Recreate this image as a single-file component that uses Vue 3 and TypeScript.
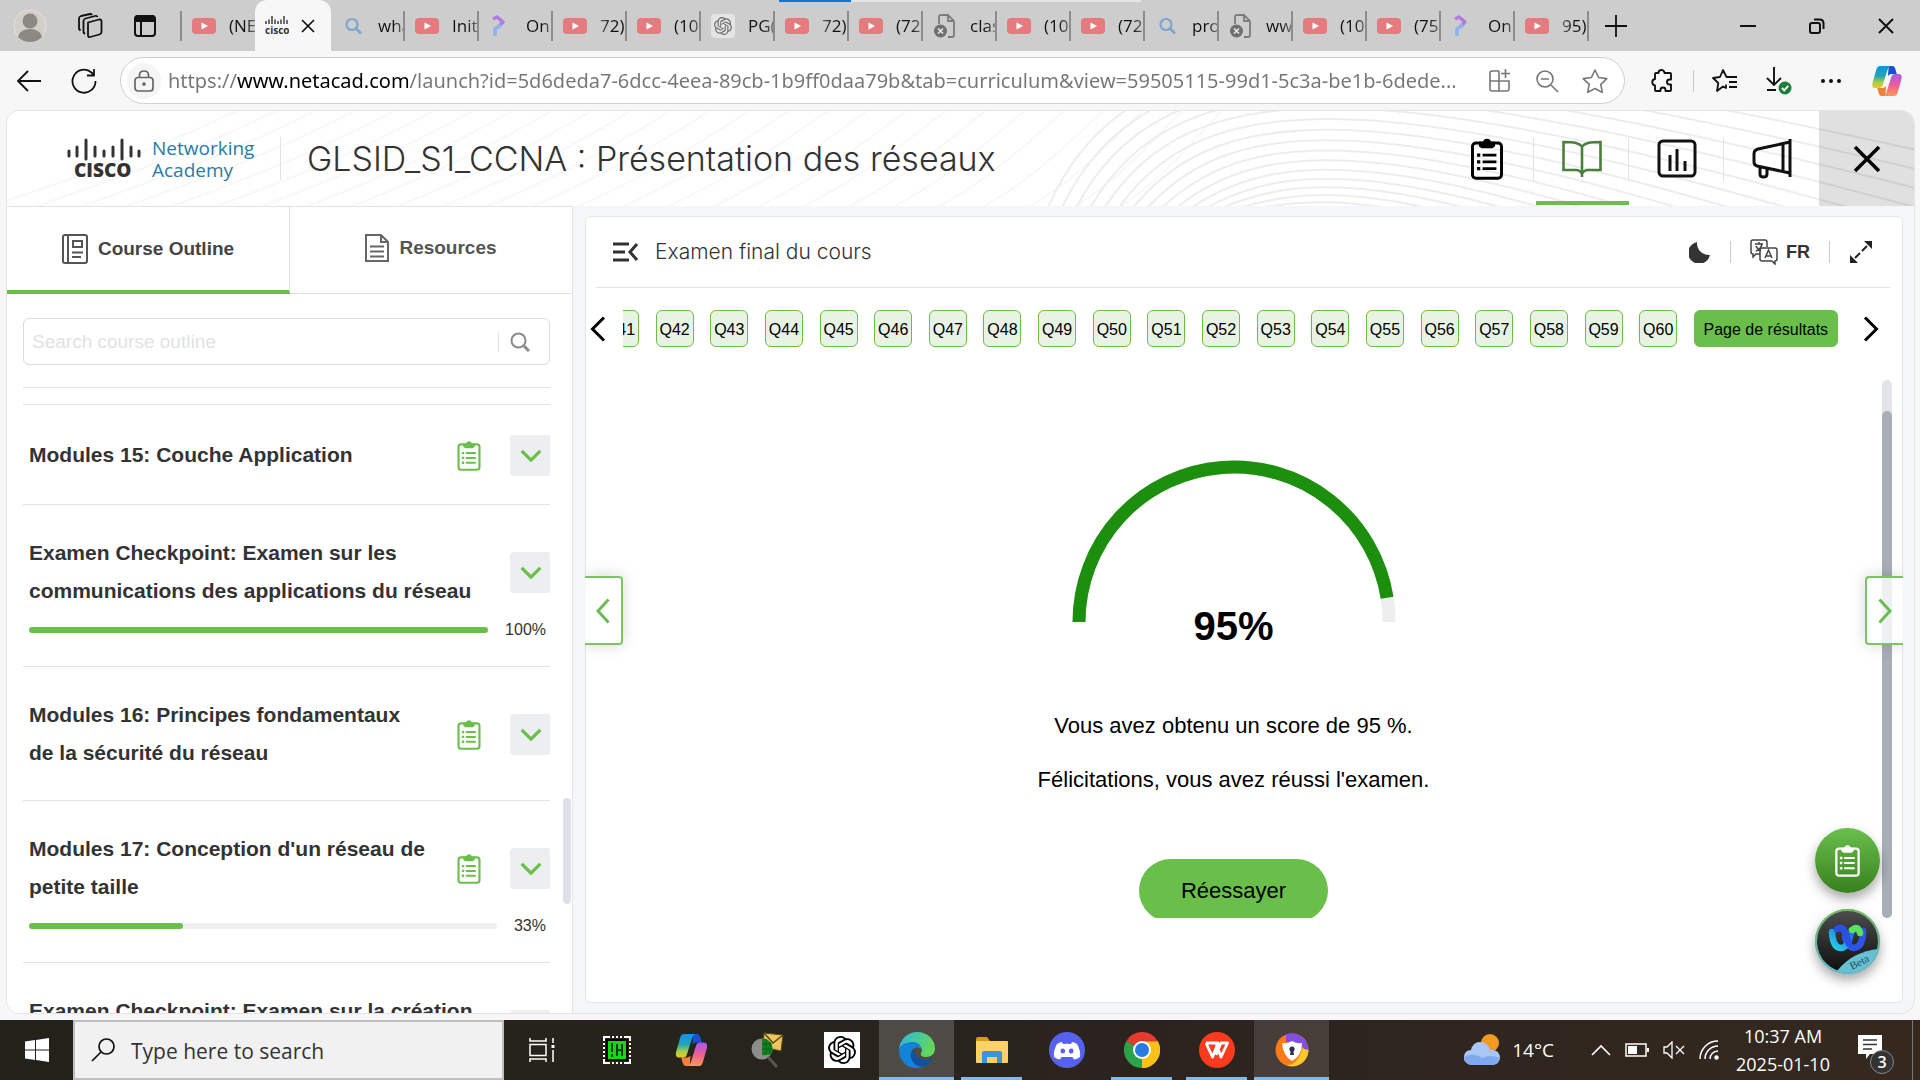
<script setup lang="ts">
import { ref } from 'vue'

type TabIcon = 'youtube' | 'search' | 'pearson' | 'gpt' | 'broken'

interface BrowserTab {
  icon: TabIcon
  title: string
  fade?: boolean
}

interface OutlineItem {
  title: string
  assessment: boolean
  progress?: number
}

interface TaskbarApp {
  icon: string
  label: string
  open?: boolean
  active?: boolean
}

const url = ref(
  'https://www.netacad.com/launch?id=5d6deda7-6dcc-4eea-89cb-1b9ff0daa79b&tab=curriculum&view=59505115-99d1-5c3a-be1b-6dede...',
)
const outlineQuery = ref('')
const systemQuery = ref('')

const tabs: BrowserTab[] = [
  { icon: 'search', title: 'wha' },
  { icon: 'youtube', title: 'Init' },
  { icon: 'pearson', title: 'On' },
  { icon: 'youtube', title: '72)', fade: true },
  { icon: 'youtube', title: '(10' },
  { icon: 'gpt', title: 'PG(' },
  { icon: 'youtube', title: '72)', fade: true },
  { icon: 'youtube', title: '(72' },
  { icon: 'broken', title: 'clas' },
  { icon: 'youtube', title: '(10' },
  { icon: 'youtube', title: '(72' },
  { icon: 'search', title: 'pro' },
  { icon: 'broken', title: 'ww' },
  { icon: 'youtube', title: '(10' },
  { icon: 'youtube', title: '(75' },
  { icon: 'pearson', title: 'On' },
  { icon: 'youtube', title: '95)', fade: true },
]

const questions = Array.from({ length: 20 }, (_, i) => `Q${41 + i}`)

const outline: OutlineItem[] = [
  { title: 'Modules 15: Couche Application', assessment: true },
  {
    title: 'Examen Checkpoint: Examen sur les communications des applications du réseau',
    assessment: false,
    progress: 100,
  },
  { title: 'Modules 16: Principes fondamentaux de la sécurité du réseau', assessment: true },
  { title: "Modules 17: Conception d'un réseau de petite taille", assessment: true, progress: 33 },
  { title: 'Examen Checkpoint: Examen sur la création et la sécurisation', assessment: false },
]

const apps: TaskbarApp[] = [
  { icon: 'taskview', label: 'Task View' },
  { icon: 'chip', label: 'HWiNFO' },
  { icon: 'copilot', label: 'Copilot' },
  { icon: 'netscan', label: 'Network scanner' },
  { icon: 'openai', label: 'ChatGPT' },
  { icon: 'edge', label: 'Microsoft Edge', open: true, active: true },
  { icon: 'explorer', label: 'File Explorer', open: true },
  { icon: 'discord', label: 'Discord' },
  { icon: 'chrome', label: 'Google Chrome', open: true },
  { icon: 'wps', label: 'WPS Office', open: true },
  { icon: 'avast', label: 'Secure Browser', open: true, active: true },
]

const score = 95
const radius = 155
const angle = Math.PI * (1 - score / 100)
const endX = 162 + radius * Math.cos(angle)
const endY = 162 - radius * Math.sin(angle)
const scoreArc = `M7 162A${radius} ${radius} 0 0 1 ${endX} ${endY}`

const risingWaves = Array.from(
  { length: 26 },
  (_, i) => `M${-60 + i * 46} 110C${60 + i * 44} 70 ${150 + i * 41} 40 ${250 + i * 39} -10`,
)
const fallingWaves = Array.from(
  { length: 16 },
  (_, i) => `M${1040 + i * 14} 100C${1120 + i * 16} ${-90 + i * 12} ${1340 + i * 8} ${-90 + i * 12} 1960 ${50 + i * 20}`,
)
</script>

<template>
  <svg class="sprite" aria-hidden="true">
    <symbol id="clipboard" viewBox="0 0 24 32">
      <rect x="1.2" y="4.5" width="21.6" height="26.2" rx="2.6" fill="none" stroke="currentColor" stroke-width="2.2" />
      <path d="M6 3.6h3a3.1 3.1 0 0 1 6 0h3v3.2l-2 1.6H8L6 6.800z" fill="currentColor" />
      <path d="M8.700 13.500H19M8.700 18.500H19M8.700 23.500H19" stroke="currentColor" stroke-width="2" />
      <path d="M4.600 13.500h2.400M4.600 18.500h2.400M4.600 23.500h2.400" stroke="currentColor" stroke-width="2.400" />
    </symbol>
    <symbol id="chevron" viewBox="0 0 24 14">
      <path d="M2 2l10 10L22 2" fill="none" stroke="currentColor" stroke-width="3.500" />
    </symbol>
    <symbol id="knot" viewBox="0 0 24 24">
      <path
        d="M22.280 9.820a5.980 5.980 0 0 0-.520-4.910 6.050 6.050 0 0 0-6.510-2.900A6.070 6.070 0 0 0 4.980 4.180a5.980 5.980 0 0 0-4 2.900 6.050 6.050 0 0 0 .740 7.100 5.980 5.980 0 0 0 .510 4.910 6.050 6.050 0 0 0 6.510 2.900A5.980 5.980 0 0 0 13.260 24a6.060 6.060 0 0 0 5.770-4.210 5.990 5.990 0 0 0 4-2.900 6.060 6.060 0 0 0-.750-7.070zM13.260 22.430a4.480 4.480 0 0 1-2.880-1.040l.140-.080 4.780-2.760a.800.800 0 0 0 .390-.680v-6.740l2.020 1.170.040.050v5.580a4.500 4.500 0 0 1-4.490 4.500zM3.600 18.300a4.470 4.470 0 0 1-.530-3.010l.140.090 4.780 2.760a.770.770 0 0 0 .780 0l5.840-3.370v2.330l-.030.060-4.840 2.790a4.500 4.500 0 0 1-6.140-1.650zM2.340 7.900a4.490 4.490 0 0 1 2.370-1.970v5.680a.770.770 0 0 0 .390.680l5.810 3.350-2.020 1.170h-.070l-4.830-2.790A4.500 4.500 0 0 1 2.340 7.870zm16.600 3.860-5.840-3.390L15.120 7.200h.070l4.830 2.790a4.490 4.490 0 0 1-.680 8.100v-5.680a.790.790 0 0 0-.400-.650zm2.010-3.020-.140-.090-4.770-2.780a.780.780 0 0 0-.790 0L9.410 9.230V6.900l.030-.060 4.830-2.790a4.500 4.500 0 0 1 6.680 4.660zM8.310 12.860l-2.020-1.160-.040-.060V6.070a4.500 4.500 0 0 1 7.380-3.450l-.140.080-4.780 2.760a.800.800 0 0 0-.390.680zm1.100-2.360 2.600-1.500 2.610 1.500v3l-2.600 1.500-2.610-1.500z"
        fill="currentColor"
      />
    </symbol>
    <symbol id="copilot" viewBox="0 0 34 36">
      <defs>
        <linearGradient id="cpl" x1="0" y1="0" x2="0" y2="1">
          <stop offset="0" stop-color="#1590e8" />
          <stop offset=".45" stop-color="#22a5b5" />
          <stop offset=".75" stop-color="#a8cf45" />
          <stop offset="1" stop-color="#f3c722" />
        </linearGradient>
        <linearGradient id="cpr" x1="0" y1="0" x2="0" y2="1">
          <stop offset="0" stop-color="#a35bea" />
          <stop offset=".5" stop-color="#ee5c96" />
          <stop offset="1" stop-color="#fb9a55" />
        </linearGradient>
      </defs>
      <path d="M19 1h4c2 0 3 2 3.600 4l1.400 5h-7l-3 2z" fill="#1a50cf" />
      <path d="M15 35h-4c-2 0-3-2-3.500-4L6 26h7l3-2z" fill="#f2803a" />
      <path d="M9 1h12c-2 1-3 3-3.600 5l-5 16c-.8 3-2 4-4.400 4H4C0 26 0 22 1 19L5 5c1-3 2-4 4-4z" fill="url(#cpl)" />
      <path d="M25 35H13c2-1 3-3 3.600-5l5-16c.8-3 2-4 4.400-4h4c4 0 4 4 3 7l-4 14c-1 3-2 4-4 4z" fill="url(#cpr)" />
    </symbol>
  </svg>

  <div class="desktop">
    <header class="tabstrip">
      <div class="strip-tools">
        <button class="bare" aria-label="Profile">
          <svg width="34" height="34" viewBox="0 0 34 34">
            <circle cx="17" cy="17" r="16" fill="#d2cfcb" stroke="#e6e3df" />
            <circle cx="17" cy="12" r="7.500" fill="#8c8884" />
            <path d="M5 28c1-5 6-8 12-8s11 3 12 8c-3 3-7 5-12 5s-9-2-12-5z" fill="#8c8884" />
          </svg>
        </button>
        <button class="bare" aria-label="Workspaces">
          <svg width="26" height="26" viewBox="0 0 26 26" fill="none" stroke="#111" stroke-width="1.800" stroke-linejoin="round">
            <path d="M11 9.500 22 6.500q2.500-.500 2.500 2V19q0 2-2 2.500L13 24q-2 .500-2-2z" />
            <path d="M8 21 6.500 19.500V8q0-2 2-2.500L18 3q2-.500 2.500 1" />
            <path d="M3.500 17.500 2 16V5.500q0-2 2-2.500l9-2q1.500 0 2 1" />
          </svg>
        </button>
        <button class="bare" aria-label="Tab actions">
          <svg width="24" height="24" viewBox="0 0 24 24">
            <rect x="2" y="2" width="20" height="20" rx="3" fill="none" stroke="#111" stroke-width="2" />
            <path d="M1.500 4Q2 1 5 1h14q3 0 3.500 3v4h-21z" fill="#111" />
            <path d="M8 8v14" stroke="#111" stroke-width="2" />
          </svg>
        </button>
      </div>

      <div class="tabs">
        <div class="tab lead">
          <svg class="fav" viewBox="0 0 24 18"><rect y="1" width="24" height="16" rx="4" fill="#e57b7e" /><path d="M9.500 5.500 16 9l-6.500 3.500z" fill="#fff" /></svg>
          <span class="tab-title">(NE</span>
        </div>
        <div class="tab current">
          <svg width="24" height="20" viewBox="0 0 24 20" stroke="#333" stroke-width="1.400">
            <path d="M1 5v3M4 3.500V8M7 0v8M10 3.500V8M13 5v3M16 3.500V8M19 0v8M22 4v4" />
            <text x="0" y="18" font-size="10" font-weight="700" fill="#333" stroke="none" font-family="Open Sans, sans-serif">cisco</text>
          </svg>
          <button class="bare" aria-label="Close tab">
            <svg width="14" height="14" viewBox="0 0 14 14"><path d="M1 1l12 12M13 1 1 13" stroke="#111" stroke-width="1.700" /></svg>
          </button>
        </div>
        <div v-for="(tab, i) in tabs" :key="i" class="tab">
          <svg v-if="tab.icon === 'youtube'" class="fav" viewBox="0 0 24 18"><rect y="1" width="24" height="16" rx="4" fill="#e57b7e" /><path d="M9.500 5.500 16 9l-6.500 3.500z" fill="#fff" /></svg>
          <svg v-else-if="tab.icon === 'search'" class="fav" viewBox="0 0 24 18"><circle cx="11" cy="7.500" r="5.500" fill="none" stroke="#7da7cf" stroke-width="2.200" /><path d="m15 11.500 5 5" stroke="#7da7cf" stroke-width="2.600" /></svg>
          <svg v-else-if="tab.icon === 'pearson'" class="fav tall" viewBox="0 0 24 24">
            <path d="M4 5 8 3l6 5-5 5" fill="none" stroke="#b07be0" stroke-width="3.500" stroke-linejoin="round" />
            <path d="M6 22v-7l6-4" fill="none" stroke="#8fb2ee" stroke-width="3.500" />
          </svg>
          <svg v-else-if="tab.icon === 'gpt'" class="fav tall" viewBox="0 0 24 24"><rect width="24" height="24" rx="4" fill="#e4e4e4" /><g transform="translate(3 3) scale(.75)" color="#6c6c6c"><use href="#knot" width="24" height="24" /></g></svg>
          <svg v-else class="fav tall" viewBox="0 0 24 24"><path d="M6 10V3q0-2 2-2h7l6 6v14q0 2-2 2h-4M15 1v6h6" fill="none" stroke="#7c7c7c" stroke-width="1.800" /><circle cx="7.500" cy="17" r="6.500" fill="#707070" /><path d="m5 14.500 5 5m0-5-5 5" stroke="#eee" stroke-width="1.500" /></svg>
          <span class="tab-title" :class="{ 'fade-start': tab.fade }">{{ tab.title }}</span>
        </div>
        <button class="bare new-tab" aria-label="New tab">
          <svg width="22" height="22" viewBox="0 0 22 22"><path d="M11 0v22M0 11h22" stroke="#111" stroke-width="1.800" /></svg>
        </button>
      </div>

      <div class="window-buttons">
        <button class="bare" aria-label="Minimize"><svg width="16" height="16" viewBox="0 0 16 16"><path d="M0 8h16" stroke="#111" stroke-width="2" /></svg></button>
        <button class="bare" aria-label="Restore"><svg width="16" height="16" viewBox="0 0 16 16" fill="none" stroke="#111" stroke-width="2"><rect x="1" y="5" width="10" height="10" rx="2" /><path d="M5 1.500h5.500q4 0 4 4V11" /></svg></button>
        <button class="bare" aria-label="Close"><svg width="16" height="16" viewBox="0 0 16 16"><path d="M1 1l14 14M15 1 1 15" stroke="#111" stroke-width="2" /></svg></button>
      </div>
      <div class="media-bar"><span></span></div>
    </header>

    <div class="toolbar">
      <button class="bare" aria-label="Back"><svg width="26" height="24" viewBox="0 0 26 24" fill="none" stroke="#111" stroke-width="1.800"><path d="M25 12H2M12 2 2 12l10 10" /></svg></button>
      <button class="bare reload" aria-label="Refresh"><svg width="26" height="26" viewBox="0 0 26 26" fill="none" stroke="#111" stroke-width="1.800"><path d="M24.500 13A11.500 11.500 0 1 1 20.500 4.500L23 7M23 1v6.500h-7" /></svg></button>
      <div class="address">
        <button class="bare lock" aria-label="Site information">
          <svg width="20" height="22" viewBox="0 0 20 22" fill="none" stroke="#666" stroke-width="1.700"><rect x="1" y="7.500" width="18" height="13.500" rx="3" /><path d="M5.500 7.500V5q0-4 4.500-4t4.500 4v2.500" /><circle cx="10" cy="14" r="1" fill="#666" /></svg>
        </button>
        <input v-model="url" class="url" type="text" aria-label="Address" spellcheck="false" />
        <button class="bare" aria-label="Install app"><svg width="24" height="24" viewBox="0 0 24 24" fill="none" stroke="#777" stroke-width="1.600"><path d="M11 2H4Q2 2 2 4v16q0 2 2 2h15q2 0 2-2v-8H2M11 2v20M17.500 0v9M13 4.500h9" /></svg></button>
        <button class="bare" aria-label="Zoom"><svg width="24" height="24" viewBox="0 0 24 24" fill="none" stroke="#777" stroke-width="1.600"><circle cx="10" cy="10" r="8" /><path d="m16 16 7 7M6 10h8" /></svg></button>
        <button class="bare" aria-label="Add to favorites"><svg width="26" height="24" viewBox="0 0 26 24" fill="none" stroke="#777" stroke-width="1.600" stroke-linejoin="round"><path d="m13 1 3.600 7.500 8.200 1.100-6 5.700 1.500 8.100L13 19.500l-7.300 3.900 1.500-8.100-6-5.700 8.200-1.100z" /></svg></button>
      </div>
      <div class="tool-icons">
        <button class="bare" aria-label="Extensions"><svg width="26" height="26" viewBox="0 0 26 26" fill="none" stroke="#111" stroke-width="1.900" stroke-linejoin="round"><path d="M9.500 5a3 3 0 0 1 6 0h5.500q1 0 1 1v5.500h-1.500a2.500 2.500 0 0 0 0 5H22V22q0 1-1 1h-4.500v-1a2.500 2.500 0 0 0-5 0v1H7q-1 0-1-1v-4.500a3.300 3.300 0 0 1 0-6.500V6q0-1 1-1z" /></svg></button>
        <span class="rule"></span>
        <button class="bare" aria-label="Favorites"><svg width="26" height="24" viewBox="0 0 26 24" fill="none" stroke="#111" stroke-width="1.800" stroke-linejoin="round"><path d="M14 15.500V19l-3-1.500L5 22l1.300-8L1 9l7-1 3-7 3.500 7H25M17 13h8M17 18h8" /></svg></button>
        <button class="bare" aria-label="Downloads"><svg width="26" height="28" viewBox="0 0 26 28" fill="none" stroke="#111" stroke-width="1.900"><path d="M8 0v18M1 11l7 7 7-7M1 23h9" /><circle cx="19" cy="21" r="6.500" fill="#1b7f3b" stroke="none" /><path d="m16 21 2.200 2.300 4-4.500" stroke="#fff" /></svg></button>
        <button class="bare" aria-label="Settings and more"><svg width="22" height="6" viewBox="0 0 22 6" fill="#111"><circle cx="3" cy="3" r="2" /><circle cx="11" cy="3" r="2" /><circle cx="19" cy="3" r="2" /></svg></button>
        <button class="bare" aria-label="Copilot"><svg width="34" height="32"><use href="#copilot" width="34" height="32" /></svg></button>
      </div>
    </div>

    <main class="page">
      <header class="course-bar">
        <svg class="waves" viewBox="0 0 1908 95" preserveAspectRatio="none" fill="none" aria-hidden="true">
          <g stroke="#f8f8f9" stroke-width="2"><path v-for="(d, i) in risingWaves" :key="i" :d="d" /></g>
          <g stroke="#ecedf1" stroke-width="2"><path v-for="(d, i) in fallingWaves" :key="i" :d="d" /></g>
        </svg>
        <a class="brand" href="#">
          <svg width="74" height="42" viewBox="0 0 74 42">
            <path d="M2 13v5M10 9v9M19 2v19M28 9v9M37 13v5M46 9v9M55 2v19M64 9v9M72 13v5" stroke="#333" stroke-width="3" stroke-linecap="round" />
            <text x="7" y="39" font-size="19" font-weight="800" fill="#333" font-family="Open Sans, sans-serif">CISCO</text>
          </svg>
          <span>Networking<br />Academy</span>
        </a>
        <h1>GLSID_S1_CCNA : Présentation des réseaux</h1>
        <nav>
          <button class="bare nav-item" aria-label="Assessments"><svg width="34" height="43"><use href="#clipboard" width="34" height="43" /></svg></button>
          <button class="bare nav-item selected" aria-label="Curriculum"><svg width="40" height="38" viewBox="0 0 40 38" fill="none" stroke="#4a7f3c" stroke-width="2.600"><path d="M20 6.500C17 3 13 2 1.500 2v28H14q4 0 6 4 2-4 6-4h12.500V2C27 2 23 3 20 6.500zV37" /></svg></button>
          <button class="bare nav-item" aria-label="Grades"><svg width="40" height="40" viewBox="0 0 40 40" fill="none" stroke="#111" stroke-width="3"><rect x="2" y="2" width="36" height="35" rx="4" /><path d="M13 16v16M20 10v22M28 22v10" /></svg></button>
          <button class="bare nav-item" aria-label="Announcements"><svg width="42" height="42" viewBox="0 0 42 42" fill="none" stroke="#111" stroke-width="3"><path d="M39 1v38M32 5v29M39 4 7 11Q3 12 3 16v8q0 3 3 4l33 7M9 29v7q0 3 3.500 3t3.500-3v-6" /></svg></button>
          <button class="bare nav-item exit" aria-label="Close course"><svg width="28" height="28" viewBox="0 0 28 28"><path d="M2 2l24 24M26 2 2 26" stroke="#000" stroke-width="3.500" /></svg></button>
        </nav>
      </header>

      <div class="workspace">
        <aside>
          <div class="side-tabs">
            <button class="bare side-tab chosen">
              <svg width="26" height="30" viewBox="0 0 26 30" fill="none" stroke="#555" stroke-width="2"><rect x="1" y="1" width="24" height="28" rx="2" /><path d="M6 1v28M10 18.500h11M10 23h9" /><rect x="11" y="7" width="9" height="6" /></svg>
              Course Outline
            </button>
            <button class="bare side-tab">
              <svg width="24" height="28" viewBox="0 0 24 28" fill="none" stroke="#666" stroke-width="2"><path d="M1 1h15l7 7v19H1zM16 1v7h7M5 12.500h14M5 17.500h14M5 22.500h14" /></svg>
              Resources
            </button>
          </div>
          <div class="outline-search">
            <input v-model="outlineQuery" type="text" placeholder="Search course outline" aria-label="Search course outline" />
            <button class="bare" aria-label="Search"><svg width="20" height="20" viewBox="0 0 20 20" fill="none" stroke="#8a8a8a" stroke-width="2"><circle cx="8.500" cy="8.500" r="7" /><path d="m14 14 5 5" stroke-width="3" /></svg></button>
          </div>
          <div class="outline">
            <section v-for="item in outline" :key="item.title">
              <div class="item-row">
                <h2>{{ item.title }}</h2>
                <svg v-if="item.assessment" class="item-icon" width="24" height="31"><use href="#clipboard" width="24" height="31" /></svg>
                <button class="bare expand" aria-label="Expand"><svg width="24" height="13"><use href="#chevron" width="24" height="13" /></svg></button>
              </div>
              <div v-if="item.progress" class="progress">
                <div class="bar"><span :style="{ width: item.progress + '%' }"></span></div>
                <span>{{ item.progress }}%</span>
              </div>
            </section>
          </div>
          <div class="side-scroll"></div>
        </aside>

        <div class="stage">
          <article>
            <header class="lesson-bar">
              <button class="bare" aria-label="Toggle menu"><svg width="26" height="20" viewBox="0 0 26 20" fill="none" stroke="#333" stroke-width="3"><path d="M0 2h16M0 10h12M0 18h16M24 2l-7 8 7 8" /></svg></button>
              <h2>Examen final du cours</h2>
              <div class="lesson-tools">
                <button class="bare" aria-label="Dark mode"><svg width="22" height="22" viewBox="0 0 22 22"><path d="M8 1A11 11 0 1 0 21 14 12 12 0 0 1 8 1z" fill="#333" /></svg></button>
                <span class="rule"></span>
                <button class="bare lang">
                  <svg width="28" height="26" viewBox="0 0 28 26" fill="none" stroke="#444" stroke-width="1.500"><path d="M10 15H6l-3 3v-3q-2 0-2-2V3q0-2 2-2h12q2 0 2 2v5M5 5h8M9 3v2M6 12q5-2 6-7M6 7q2 4 5 5" /><path d="M12 9h13q2 0 2 2v9q0 2-2 2v3l-3-3H12q-2 0-2-2v-9q0-2 2-2zM15 19l3.500-8 3.500 8M16 17h5" /></svg>
                  FR
                </button>
                <span class="rule"></span>
                <button class="bare" aria-label="Fullscreen"><svg width="24" height="24" viewBox="0 0 24 24"><path d="m6 18 5-5M13 11l5-5" stroke="#222" stroke-width="2" /><path d="M23 1v8l-8-8zM1 23v-8l8 8z" fill="#222" /></svg></button>
              </div>
            </header>
            <div class="question-bar">
              <button class="bare" aria-label="Previous questions"><svg width="16" height="26" viewBox="0 0 16 26" fill="none" stroke="#000" stroke-width="3"><path d="M14 1.500 2.500 13 14 24.500" /></svg></button>
              <div class="question-window">
                <div class="question-track">
                  <button v-for="q in questions" :key="q" class="chip">{{ q }}</button>
                  <button class="chip results">Page de résultats</button>
                </div>
              </div>
              <button class="bare" aria-label="Next questions"><svg width="16" height="26" viewBox="0 0 16 26" fill="none" stroke="#000" stroke-width="3"><path d="M2 1.500 13.500 13 2 24.500" /></svg></button>
            </div>
            <div class="lesson-view">
              <div class="result">
                <div class="gauge">
                  <svg width="324" height="162" viewBox="0 0 324 162" fill="none" stroke-width="13" aria-hidden="true">
                    <path d="M7 162A155 155 0 0 1 317 162" stroke="#eee" />
                    <path :d="scoreArc" stroke="#1c8f0f" />
                  </svg>
                  <strong>{{ score }}%</strong>
                </div>
                <p>Vous avez obtenu un score de 95 %.</p>
                <p>Félicitations, vous avez réussi l'examen.</p>
                <button class="retry">Réessayer</button>
              </div>
              <div class="view-scroll"><span></span></div>
            </div>
            <button class="pager prev" aria-label="Previous page"><svg width="14" height="26" viewBox="0 0 14 26" fill="none" stroke="#6cbd50" stroke-width="3"><path d="M12.500 1.500 2 13l10.500 11.500" /></svg></button>
            <button class="pager next" aria-label="Next page"><svg width="14" height="26" viewBox="0 0 14 26" fill="none" stroke="#6cbd50" stroke-width="3"><path d="M1.500 1.500 12 13 1.500 24.500" /></svg></button>
            <div class="floating">
              <button class="round tasks" aria-label="Assessments"><svg width="25" height="33"><use href="#clipboard" width="25" height="33" /></svg></button>
              <button class="round webex" aria-label="Webex assistant">
                <svg width="65" height="65" viewBox="0 0 65 65">
                  <defs>
                    <linearGradient id="wxring" x1="0" y1="0" x2="0" y2="1"><stop offset="0" stop-color="#76b562" /><stop offset="1" stop-color="#5bbcd8" /></linearGradient>
                    <linearGradient id="wxback" x1="0" y1="0" x2="0" y2="1"><stop offset="0" stop-color="#4c4c4c" /><stop offset="1" stop-color="#0e0e0e" /></linearGradient>
                    <linearGradient id="wxa" x1="0" y1="1" x2="1" y2="0"><stop offset="0" stop-color="#23d3e8" /><stop offset="1" stop-color="#2448e0" /></linearGradient>
                    <clipPath id="wxclip"><circle cx="32.500" cy="32.500" r="31.500" /></clipPath>
                  </defs>
                  <circle cx="32.500" cy="32.500" r="32.500" fill="url(#wxring)" />
                  <circle cx="32.500" cy="32.500" r="30.500" fill="url(#wxback)" />
                  <path d="M22 62Q38 42 65 40v25H22z" fill="#66bfd2" clip-path="url(#wxclip)" />
                  <g fill="none" stroke-width="6.500" stroke-linecap="round">
                    <path d="M48 22q0 16-9 17-6 0-9-11" stroke="#2f55e8" />
                    <path d="M17 23q1 16 9 16 6 0 9-11 2-9 8-9" stroke="url(#wxa)" />
                    <path d="M22 20q6-4 9 6l3 9" stroke="#2a50e6" />
                    <path d="M37 21q6-5 8 3" stroke="#5be25c" />
                  </g>
                  <text x="37" y="61" font-size="11" fill="#25505c" font-family="Liberation Serif, serif" transform="rotate(-27 37 61)">Beta</text>
                </svg>
              </button>
            </div>
          </article>
        </div>
      </div>
    </main>

    <footer class="taskbar">
      <button class="bare start" aria-label="Start"><svg width="24" height="24" viewBox="0 0 24 24" fill="#fff"><path d="M0 3.500 10 2v9.500H0zM11 1.900 24 0v11.500H11zM0 12.500h10V22L0 20.500zM11 12.500h13V24l-13-1.900z" /></svg></button>
      <label class="system-search">
        <svg width="24" height="24" viewBox="0 0 24 24" fill="none" stroke="#111" stroke-width="1.700"><circle cx="15.500" cy="8.500" r="7.500" /><path d="M10 14 1 23" /></svg>
        <input v-model="systemQuery" type="text" placeholder="Type here to search" />
      </label>
      <div class="apps">
        <button v-for="app in apps" :key="app.label" class="bare app" :class="{ open: app.open, active: app.active }" :aria-label="app.label">
          <svg v-if="app.icon === 'taskview'" width="26" height="24" viewBox="0 0 26 24" fill="none" stroke="#fff" stroke-width="1.500"><path d="M1 0v3h16V0M1 24v-3h16v3M24 0v5M24 12v12" /><rect x="1" y="6.500" width="16" height="11" /><path d="M22.500 8.500h3" stroke-width="3" /></svg>
          <svg v-else-if="app.icon === 'chip'" width="28" height="28" viewBox="0 0 28 28"><rect x="1" y="1" width="26" height="26" fill="none" stroke="#fff" stroke-width="2" stroke-dasharray="2 2" /><path d="M1 5V1h4M23 1h4v4M27 23v4h-4M5 27H1v-4" fill="none" stroke="#fff" stroke-width="2" /><rect x="3" y="3" width="22" height="22" fill="#000" /><rect x="5" y="5" width="18" height="18" fill="#0fdc0f" /><path d="M9 7v9M9 18v3M14 8v12M19 8v12M14 14h5" stroke="#073807" stroke-width="2" /></svg>
          <svg v-else-if="app.icon === 'copilot'" width="35" height="34"><use href="#copilot" width="35" height="34" /></svg>
          <svg v-else-if="app.icon === 'netscan'" width="34" height="36" viewBox="0 0 34 36"><path d="m14 1 19 2-2 16-18-4z" fill="#ecc560" stroke="#5c4516" /><path d="m14 1 9 10 10-8" fill="none" stroke="#5c4516" stroke-width="1.500" /><circle cx="12" cy="17" r="10.500" fill="#8d8d89" /><path d="M12 6.500a10.500 10.500 0 0 1 9 16l-9 1z" fill="#16801b" /><path d="M12 12h10M12 17h10M16 7v16M20 10v12" stroke="#062" /><path d="m18 25 9 10" stroke="#555" stroke-width="3" /></svg>
          <span v-else-if="app.icon === 'openai'" class="gpt-tile"><svg width="28" height="28"><use href="#knot" width="28" height="28" /></svg></span>
          <svg v-else-if="app.icon === 'edge'" width="36" height="36" viewBox="0 0 36 36">
            <defs><linearGradient id="edg" x1="0" y1="0" x2="1" y2=".4"><stop offset="0" stop-color="#2bb6e6" /><stop offset="1" stop-color="#62d85a" /></linearGradient></defs>
            <path d="M0 17C1 7 9 0 18 0c11 0 18 8 18 16 0 6-4 9-9 9-4 0-6-2-5-4 2-2 1-9-7-9C7 12 1 14 0 17z" fill="url(#edg)" />
            <path d="M0 18C1 12 8 10 14 10c6 0 8 4 8 7-6-4-11 1-10 7 1 6 6 10 12 11C11 39 0 31 0 18z" fill="#1183d8" />
            <path d="M15 18c-6 4-3 16 9 17 5-2 8-5 10-9-6 4-18 2-19-8z" fill="#0e53a4" />
          </svg>
          <svg v-else-if="app.icon === 'explorer'" width="34" height="28" viewBox="0 0 34 28"><path d="M1 3q0-2 2-2h9l3 4h16q2 0 2 2v4H1z" fill="#d99a18" /><rect x="1" y="5" width="32" height="22" rx="1" fill="#fbd265" /><path d="M7 27V17q0-2 2-2h16q2 0 2 2v10h-5v-6H12v6z" fill="#3c94d8" /></svg>
          <svg v-else-if="app.icon === 'discord'" width="36" height="36" viewBox="0 0 36 36"><circle cx="18" cy="18" r="18" fill="#5662ee" /><path d="M13 10q-3 .5-5 2-4 7-3 13 3 2 6 2.500l1.500-2.500h11l1.500 2.500q3-.5 6-2.500 1-6-3-13-2-1.500-5-2l-1 2q-4-.6-8 0z" fill="#fff" /><ellipse cx="13.800" cy="19" rx="2.300" ry="2.600" fill="#5662ee" /><ellipse cx="22.200" cy="19" rx="2.300" ry="2.600" fill="#5662ee" /></svg>
          <svg v-else-if="app.icon === 'chrome'" width="36" height="36" viewBox="0 0 36 36"><path d="M18 18 2.400 9a18 18 0 0 1 31.200 0z" fill="#e33b2e" /><path d="M18 18 33.600 9A18 18 0 0 1 18 36z" fill="#fbc116" /><path d="M18 18 18 36A18 18 0 0 1 2.400 9z" fill="#2da04a" /><path d="M18 9.500h15.800A18 18 0 0 1 18 36l7.400-14z" fill="#fbc116" /><circle cx="18" cy="18" r="9" fill="#fff" /><circle cx="18" cy="18" r="7" fill="#2a7ae4" /></svg>
          <svg v-else-if="app.icon === 'wps'" width="36" height="36" viewBox="0 0 36 36"><circle cx="18" cy="18" r="18" fill="#fb3a1e" /><path d="M7 11h12l-5.500 14L7 11M17 11l5 14 6.500-14H22l-5 12" fill="none" stroke="#fff" stroke-width="2.800" stroke-linejoin="round" /></svg>
          <svg v-else width="34" height="34" viewBox="0 0 34 34"><circle cx="17" cy="17" r="16.500" fill="#fb7a1c" /><path d="M11 1.600A16.500 16.500 0 0 1 33 20q-8-12-22-11z" fill="#7f4fe8" /><path d="M33.500 17A16.500 16.500 0 0 1 12 32.500q12-2 15-17z" fill="#fbcb2c" /><path d="M17 8q5 3 10 2 0 13-10 18Q8 23 7 10q5 1 10-2z" fill="#fff" /><circle cx="17" cy="16" r="2.600" fill="#2b3050" /><path d="M16 16h2l1 6h-4z" fill="#2b3050" /></svg>
        </button>
      </div>
      <div class="tray">
        <button class="bare weather">
          <svg width="38" height="32" viewBox="0 0 38 32"><circle cx="27" cy="9" r="9" fill="#f39a1e" /><path d="M9 31q-9-1-8-9 1-6 7-6 2-8 9-8 8 0 10 8 9-1 10 7 0 7-8 8z" fill="#a9c6f5" /><path d="M1 23q10-5 18 1 9-4 17 0-1 7-7 7H9q-7 0-8-8z" fill="#7fa9ee" /></svg>
          14°C
        </button>
        <button class="bare" aria-label="Show hidden icons"><svg width="20" height="12" viewBox="0 0 20 12" fill="none" stroke="#fff" stroke-width="1.600"><path d="m1 11 9-9 9 9" /></svg></button>
        <button class="bare" aria-label="Battery"><svg width="24" height="14" viewBox="0 0 24 14"><rect x="1" y="1" width="20" height="12" fill="none" stroke="#fff" stroke-width="1.500" /><path d="M3 3h9v8H3zM22 5h2v4h-2z" fill="#fff" /></svg></button>
        <button class="bare" aria-label="Volume"><svg width="22" height="18" viewBox="0 0 22 18" fill="none" stroke="#fff" stroke-width="1.300"><path d="M1 6h3l5-5v16l-5-5H1zM13 5l8 8M21 5l-8 8" /></svg></button>
        <button class="bare" aria-label="Network"><svg width="20" height="20" viewBox="0 0 20 20" fill="none" stroke="#fff" stroke-width="1.500"><path d="M1 19A18 18 0 0 1 19 1M6 19A13 13 0 0 1 19 6M11 19a8 8 0 0 1 8-8" /><circle cx="17.500" cy="17.500" r="1.500" fill="#fff" /></svg></button>
        <button class="bare clock">10:37 AM<br />2025-01-10</button>
        <button class="bare notes" aria-label="Notifications">
          <svg width="24" height="26" viewBox="0 0 24 26"><path d="M0 0h24v19H12l-4 5v-5H0z" fill="#fff" /><path d="M5 5h14M5 9.500h14M5 14h9" stroke="#333" stroke-width="1.500" /></svg>
          <span>3</span>
        </button>
        <span class="peek"></span>
      </div>
    </footer>
  </div>
</template>

<style>
body {
  margin: 0;
}
</style>

<style scoped>
* {
  box-sizing: border-box;
}

.sprite {
  position: absolute;
  width: 0;
  height: 0;
}

.desktop {
  display: flex;
  flex-direction: column;
  height: 100vh;
  overflow: hidden;
  background: #f7f7f7;
  color: #000;
  font-family: "Liberation Sans", Arial, sans-serif;
}

.bare {
  display: flex;
  flex: none;
  align-items: center;
  justify-content: center;
  padding: 0;
  border: 0;
  background: none;
  color: inherit;
  font: inherit;
}

svg {
  display: block;
  flex: none;
}

h1,
h2,
p {
  margin: 0;
}

/* Browser chrome */
.tabstrip {
  position: relative;
  display: flex;
  flex: none;
  align-items: center;
  height: 51px;
  background: #cdcdcd;
  font-family: "Open Sans", "Noto Sans", sans-serif;
}

.strip-tools {
  display: flex;
  flex: none;
  align-items: center;
  gap: 30px;
  width: 180px;
  padding-left: 13px;
}

.tabs {
  display: flex;
  flex: 1;
  align-items: center;
  height: 100%;
  min-width: 0;
}

.tab {
  display: flex;
  flex: none;
  align-items: center;
  gap: 13px;
  width: 74px;
  height: 30px;
  padding-left: 10px;
  border-right: 2px solid #8c8c8c;
  overflow: hidden;
}

.tab.lead {
  width: 75px;
  border-left: 2px solid #8c8c8c;
  border-right: 0;
}

.tab.current {
  gap: 12px;
  width: 76px;
  height: 51px;
  border: 0;
  border-radius: 12px 12px 0 0;
  background: #f7f7f7;
}

.fav {
  width: 24px;
  height: 18px;
}

.fav.tall {
  height: 24px;
}

.tab-title {
  flex: 1;
  overflow: hidden;
  color: #111;
  font-size: 17px;
  line-height: 26px;
  white-space: nowrap;
  mask-image: linear-gradient(to right, #000 60%, transparent 140%);
}

.tab-title.fade-start {
  mask-image: linear-gradient(to left, #000 60%, transparent 140%);
}

.new-tab {
  margin-left: 16px;
}

.window-buttons {
  display: flex;
  gap: 53px;
  padding-right: 26px;
}

.media-bar {
  position: absolute;
  top: 0;
  left: 779px;
  width: 362px;
  height: 2px;
  background: #e6e6e6;
}

.media-bar span {
  display: block;
  width: 20%;
  height: 2px;
  background: #0a78d4;
}

.toolbar {
  display: flex;
  flex: none;
  align-items: center;
  height: 59px;
  padding: 0 16px;
}

.reload {
  margin-left: 29px;
}

.address {
  display: flex;
  flex: 1;
  align-items: center;
  gap: 23px;
  height: 47px;
  margin-left: 23px;
  padding: 0 16px 0 6px;
  border: 1px solid #cfcfcf;
  border-radius: 24px;
  background: #fff;
}

.lock {
  width: 34px;
  height: 36px;
  border-radius: 18px;
  background: #f5f5f5;
}

.url {
  flex: 1;
  min-width: 0;
  margin-left: -16px;
  padding: 0;
  border: 0;
  outline: 0;
  background: linear-gradient(to right, #767676 69px, #000 69px, #000 240px, #767676 240px);
  background-clip: text;
  color: transparent;
  font-family: "Noto Sans", "Open Sans", sans-serif;
  font-size: 20px;
  line-height: 30px;
}

.tool-icons {
  display: flex;
  align-items: center;
  gap: 28px;
  padding-left: 24px;
}

.rule {
  flex: none;
  width: 1px;
  height: 22px;
  background: #c9c9c9;
}

.tool-icons .rule {
  margin: 0 -10px;
}

/* Course page */
.page {
  display: flex;
  flex: 1;
  flex-direction: column;
  min-height: 0;
  margin: 0 5px 6px 6px;
  border: 1px solid #e2e4e8;
  border-radius: 14px;
  background: #f5f6f8;
  overflow: hidden;
}

.course-bar {
  position: relative;
  display: flex;
  flex: none;
  align-items: center;
  height: 95px;
  background: #fff;
}

.waves {
  position: absolute;
  width: 100%;
  height: 100%;
}

.brand {
  position: relative;
  display: flex;
  align-items: center;
  gap: 11px;
  width: 274px;
  height: 43px;
  padding-left: 60px;
  border-right: 1px solid #e3e3e3;
  color: #2a7ba6;
  font-family: "Open Sans", "Noto Sans", sans-serif;
  font-size: 19px;
  line-height: 22px;
  text-decoration: none;
}

h1 {
  position: relative;
  flex: 1;
  padding-left: 26px;
  color: #333;
  font-family: Inter, "Liberation Sans", sans-serif;
  font-size: 34px;
  font-weight: 300;
  line-height: 44px;
  white-space: nowrap;
}

nav {
  position: relative;
  display: flex;
  height: 100%;
}

.nav-item {
  position: relative;
  width: 95px;
}

.nav-item:not(.exit)::before {
  position: absolute;
  top: 27px;
  right: 0;
  width: 1px;
  height: 43px;
  background: #e3e3e3;
  content: "";
}

.nav-item:nth-child(4)::before {
  display: none;
}

.selected::after {
  position: absolute;
  right: 0;
  bottom: 1px;
  left: 2px;
  height: 4px;
  background: #6abf4b;
  content: "";
}

.nav-item.exit {
  background: rgb(0 0 0 / 12%);
}

.workspace {
  display: flex;
  flex: 1;
  min-height: 0;
}

aside {
  position: relative;
  display: flex;
  flex: none;
  flex-direction: column;
  width: 566px;
  border-top: 1px solid #dfe1e4;
  border-right: 1px solid #e3e5e8;
  background: #fff;
  overflow: hidden;
}

.side-tabs {
  display: flex;
  flex: none;
  height: 87px;
}

.side-tab {
  flex: 1;
  gap: 10px;
  padding-bottom: 4px;
  border-bottom: 1px solid #dfe1e4;
  color: #555;
  font-size: 19px;
  font-weight: 700;
}

.side-tab.chosen {
  padding-bottom: 0;
  border-right: 1px solid #dfe1e4;
  border-bottom: 4px solid #6abf4b;
  color: #444;
}

.outline-search {
  display: flex;
  flex: none;
  align-items: center;
  height: 47px;
  margin: 24px 22px 0 16px;
  border: 1px solid #dcdcdc;
  border-radius: 6px;
}

.outline-search input {
  flex: 1;
  min-width: 0;
  padding: 0 0 0 8px;
  border: 0;
  border-right: 1px solid #e3e3e3;
  outline: 0;
  background: none;
  font: 19px/20px "Liberation Sans", Arial, sans-serif;
}

.outline-search input::placeholder {
  color: #e2e2e2;
}

.outline-search button {
  width: 50px;
  padding-right: 8px;
}

.outline {
  flex: 1;
  min-height: 0;
  margin: 22px 22px 0 16px;
  padding-top: 16px;
  border-top: 1px solid #e3e3e3;
  overflow: hidden;
}

.outline section {
  padding: 29px 0 28px 6px;
  border-top: 1px solid #e3e3e3;
}

.item-row {
  display: flex;
  align-items: center;
  min-height: 42px;
}

.item-row h2 {
  flex: 1;
  padding-right: 29px;
  color: #333;
  font-size: 21px;
  font-weight: 700;
  line-height: 38px;
}

.item-icon {
  margin-right: 29px;
  color: #6abf4b;
}

.expand {
  width: 41px;
  height: 41px;
  margin-right: -1px;
  border-radius: 4px;
  background: #eceeef;
  color: #6abf4b;
}

.progress {
  display: flex;
  align-items: center;
  gap: 17px;
  height: 28px;
  padding: 12px 4px 0 0;
  color: #333;
  font-size: 16px;
  line-height: 16px;
}

.bar {
  flex: 1;
  height: 6px;
  border-radius: 3px;
  background: #f0f0f0;
}

.bar span {
  display: block;
  height: 6px;
  border-radius: 3px;
  background: #6abf4b;
}

.side-scroll {
  position: absolute;
  right: 1px;
  bottom: 109px;
  width: 8px;
  height: 106px;
  border-radius: 4px;
  background: #dfe1e8;
}

.stage {
  display: flex;
  flex: 1;
  min-width: 0;
  padding: 10px 11px 10px 12px;
}

article {
  position: relative;
  display: flex;
  flex: 1;
  flex-direction: column;
  min-width: 0;
  border: 1px solid #e3e6ea;
  border-radius: 6px;
  background: #fff;
}

.lesson-bar {
  display: flex;
  flex: none;
  align-items: center;
  gap: 16px;
  height: 71px;
  margin: 0 12px 0 10px;
  padding: 0 17px;
  border-bottom: 1px solid #e3e3e3;
}

.lesson-bar h2 {
  flex: 1;
  color: #333;
  font-family: Inter, "Liberation Sans", sans-serif;
  font-size: 21px;
  font-weight: 300;
  line-height: 30px;
}

.lesson-tools {
  display: flex;
  align-items: center;
  gap: 19px;
}

.lang {
  gap: 8px;
  color: #333;
  font-size: 18px;
  font-weight: 700;
}

.question-bar {
  display: flex;
  flex: none;
  align-items: center;
  gap: 17px;
  height: 37px;
  margin: 22px 23px 0 4px;
}

.question-window {
  flex: 1;
  min-width: 0;
  margin-right: 8px;
  overflow: hidden;
}

.question-track {
  display: flex;
  justify-content: space-between;
  margin-left: -22px;
}

.chip {
  flex: none;
  width: 38px;
  height: 37px;
  padding: 2px 0 0;
  border: 1px solid #6abf4b;
  border-radius: 6px;
  background: #e8f3e4;
  color: #000;
  font: 16px/20px "Liberation Sans", Arial, sans-serif;
}

.chip.results {
  width: 144px;
  background: #6abf4b;
}

.lesson-view {
  display: flex;
  flex: 1;
  min-height: 0;
  margin: 33px 10px 84px 31px;
  overflow: hidden;
}

.result {
  display: flex;
  flex: 1;
  flex-direction: column;
  align-items: center;
  padding: 80px 32px 0 0;
  overflow: hidden;
}

.gauge {
  position: relative;
  flex: none;
  margin-bottom: 77px;
}

.gauge strong {
  position: absolute;
  right: 0;
  bottom: -26px;
  left: 0;
  font-size: 40px;
  line-height: 44px;
  text-align: center;
}

.result p {
  flex: none;
  margin: 13px 0;
  font-size: 22px;
  line-height: 28px;
}

.retry {
  flex: none;
  height: 63px;
  margin-top: 52px;
  padding: 0 42px;
  border: 0;
  border-radius: 32px;
  background: #6abf4b;
  color: #000;
  font: 22px/28px "Liberation Sans", Arial, sans-serif;
}

.view-scroll {
  width: 10px;
  padding-top: 31px;
  border-radius: 5px;
  background: #e3e4e7;
}

.view-scroll span {
  display: block;
  height: 100%;
  border-radius: 5px;
  background: #a8adb6;
}

.pager {
  position: absolute;
  top: 359px;
  display: flex;
  align-items: center;
  justify-content: center;
  width: 38px;
  height: 69px;
  padding: 0;
  border: 2px solid #7cc465;
  background: rgb(255 255 255 / 80%);
  box-shadow: 0 0 16px rgb(0 0 0 / 16%);
  clip-path: inset(-20px 0 -20px -20px);
}

.prev {
  left: -1px;
  border-left: 0;
  border-radius: 0 4px 4px 0;
  clip-path: inset(-20px -20px -20px 0);
}

.next {
  right: -1px;
  border-right: 0;
  border-radius: 4px 0 0 4px;
}

.floating {
  position: absolute;
  right: 22px;
  bottom: 28px;
  display: flex;
  flex-direction: column;
  gap: 16px;
}

.round {
  display: flex;
  align-items: center;
  justify-content: center;
  width: 65px;
  height: 65px;
  padding: 0;
  border: 0;
  border-radius: 50%;
  background: linear-gradient(#6abf4b, #38801f);
  box-shadow: 0 6px 12px rgb(0 0 0 / 35%);
  color: #fff;
}

/* Windows taskbar */
.taskbar {
  display: flex;
  flex: none;
  height: 60px;
  background: linear-gradient(to right, #23221a, #26241c 40%, #2c231f 60%, #35291f);
  color: #fff;
  font-family: "Open Sans", "Noto Sans", sans-serif;
}

.start {
  width: 73px;
}

.system-search {
  display: flex;
  flex: none;
  align-items: center;
  gap: 16px;
  width: 431px;
  padding-left: 16px;
  border: 2px solid #bfbfbf;
  background: #f1f1f1;
}

.system-search input {
  flex: 1;
  min-width: 0;
  padding: 2px 0 0;
  border: 0;
  outline: 0;
  background: none;
  font: 21px/30px "Open Sans", "Noto Sans", sans-serif;
}

.system-search input::placeholder {
  color: #333;
}

.apps {
  display: flex;
  flex: 1;
}

.app {
  width: 75px;
  background: linear-gradient(#82b9e6, #82b9e6) bottom / 0 3px no-repeat;
}

.app.open {
  background-size: 61px 3px;
}

.app.active {
  background-color: rgb(255 255 255 / 18%);
  background-size: 100% 3px;
}

.app.active:last-child {
  background-color: rgb(255 255 255 / 12%);
}

.gpt-tile {
  display: flex;
  align-items: center;
  justify-content: center;
  width: 36px;
  height: 36px;
  background: #fff;
  color: #000;
}

.tray {
  display: flex;
  align-items: center;
  gap: 14px;
}

.weather {
  gap: 11px;
  margin-right: 23px;
  font-size: 19px;
}

.clock {
  display: block;
  width: 100px;
  font-size: 18px;
  line-height: 28px;
  text-align: center;
}

.notes {
  position: relative;
  align-items: flex-start;
  justify-content: flex-start;
  width: 40px;
  height: 46px;
  margin-left: 11px;
  padding-top: 8px;
}

.notes span {
  position: absolute;
  right: 4px;
  bottom: -1px;
  width: 24px;
  height: 24px;
  border: 1px solid #888;
  border-radius: 50%;
  background: #333;
  font-size: 16px;
  font-weight: 600;
  line-height: 22px;
}

.peek {
  width: 8px;
  height: 60px;
  border-left: 1px solid #777;
}
</style>
